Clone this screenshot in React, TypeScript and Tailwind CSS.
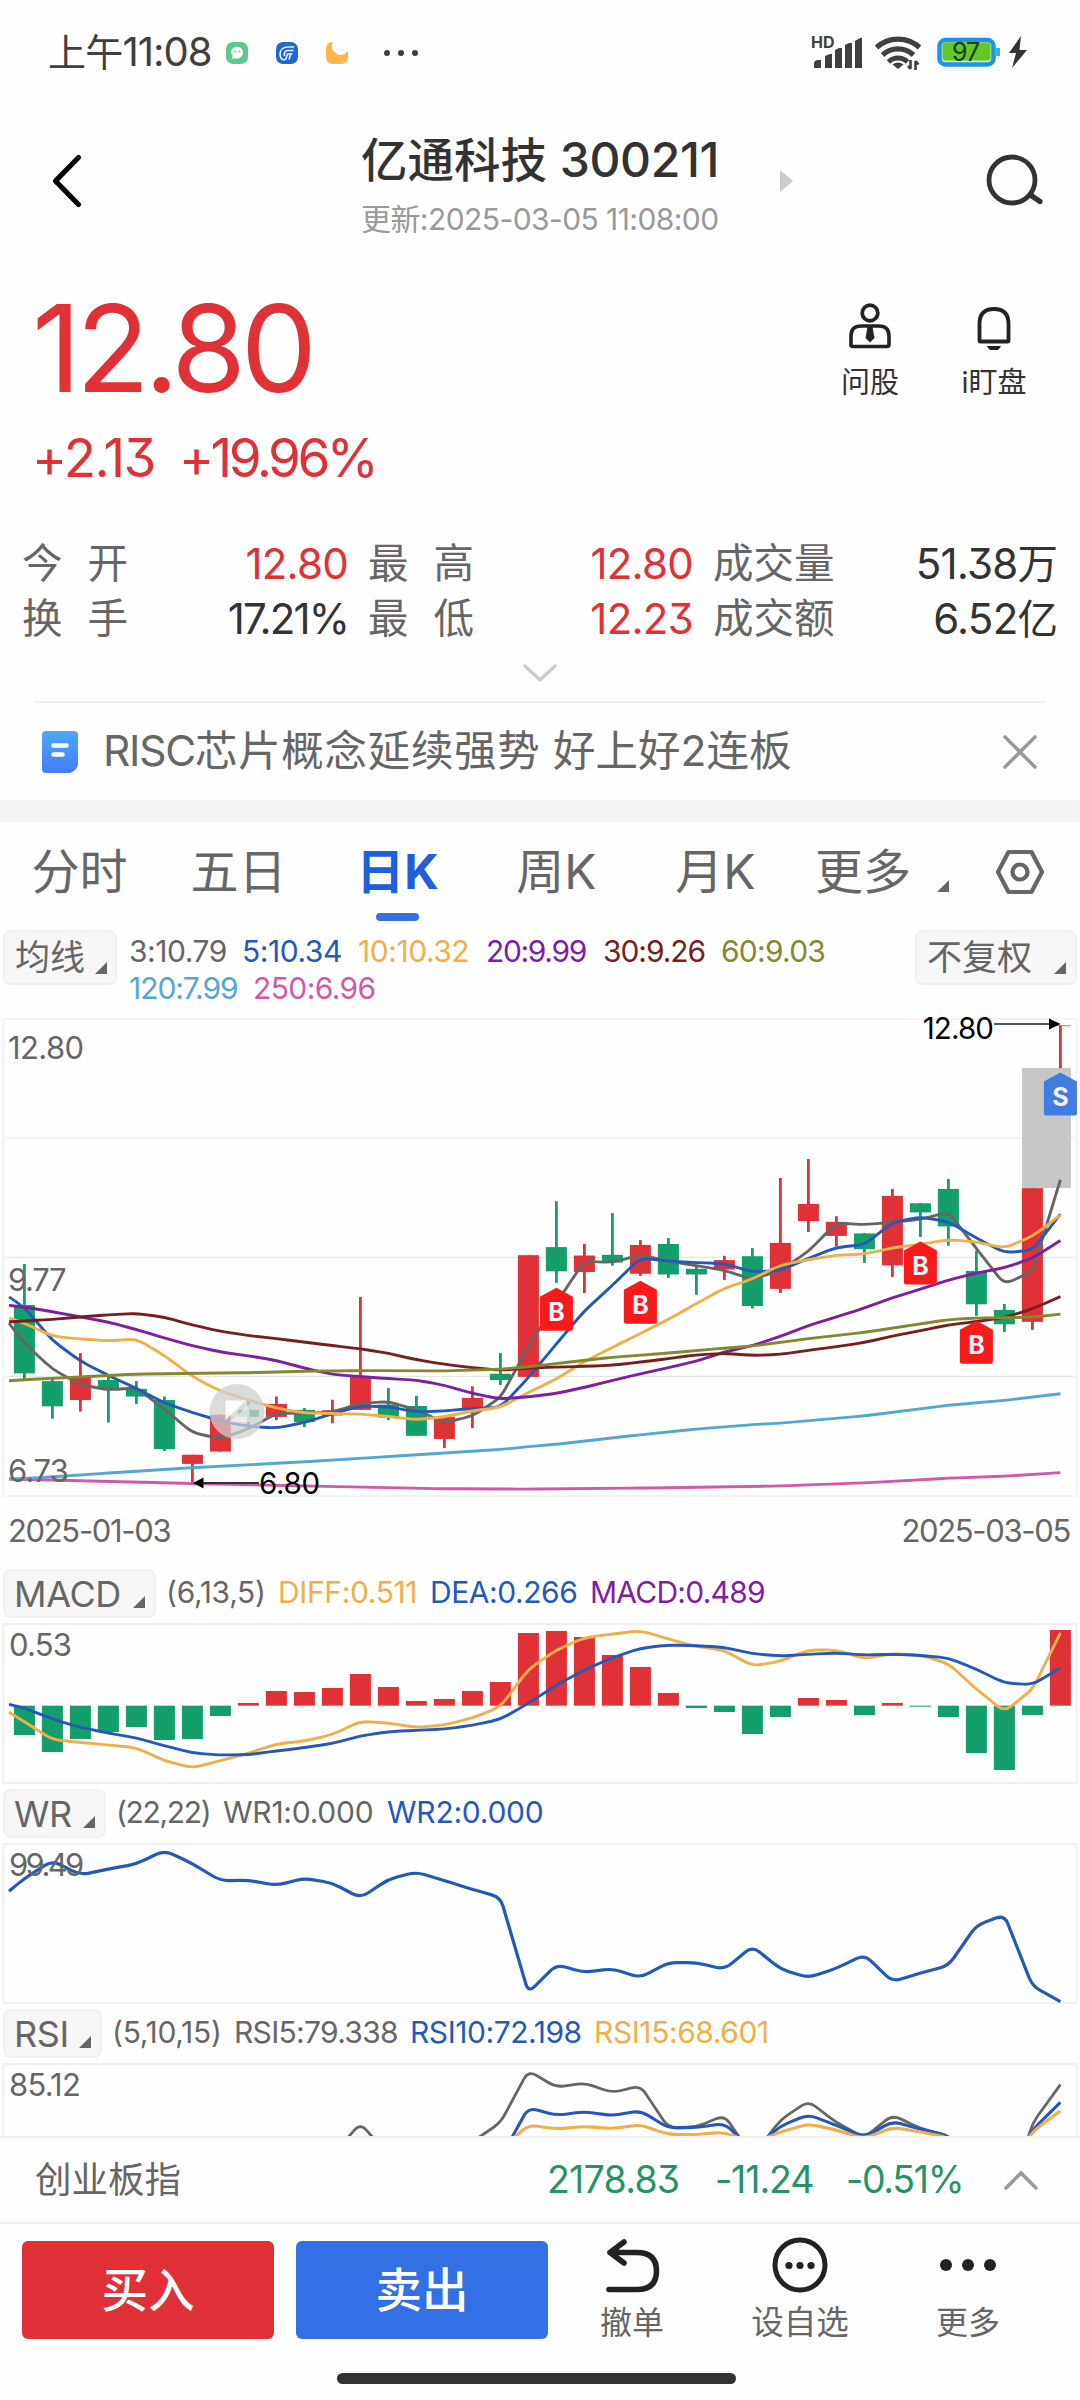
import React from "react";

const RED = "#df3136";
const GREEN = "#149e6b";
const BLUE = "#2459b9";
const ORANGE = "#efb04a";
const GRAY = "#666666";

type Candle = [up: 0 | 1, high: number, top: number, bottom: number, low: number];
type Point = [index: number, value: number];

const STEP = 28;
const FIRST = 24.4;
const xAt = (i: number) => FIRST + STEP * i;

/** Turns a list of values (first one sits on the left edge) into points. */
const series = (values: number[]): Point[] => values.map((v, i) => [i === 0 ? -0.55 : i - 1, v]);

/** Polyline with slightly softened corners. */
function softPath(points: Point[], y: (v: number) => number) {
  const p = points.map(([i, v]) => [xAt(i), y(v)]);
  let d = `M${p[0][0]} ${p[0][1]}`;
  for (let k = 1; k < p.length - 1; k++) {
    const [a, b, c] = [p[k - 1], p[k], p[k + 1]];
    const la = Math.hypot(b[0] - a[0], b[1] - a[1]);
    const lc = Math.hypot(c[0] - b[0], c[1] - b[1]);
    const ta = Math.min(9 / la, 0.5);
    const tc = Math.min(9 / lc, 0.5);
    d += `L${b[0] + (a[0] - b[0]) * ta} ${b[1] + (a[1] - b[1]) * ta}`;
    d += `Q${b[0]} ${b[1]} ${b[0] + (c[0] - b[0]) * tc} ${b[1] + (c[1] - b[1]) * tc}`;
  }
  const e = p[p.length - 1];
  return d + `L${e[0]} ${e[1]}`;
}

const priceY = (v: number) => v / 2.851;
const panelY = (v: number) => v / 3 - 60;
const wrY = (v: number) => v / 3 - 280;

const candles: Candle[] = [
  [0, 724, 841, 1036, 1052], [0, 1052, 1058, 1130, 1165], [1, 978, 1046, 1112, 1145],
  [0, 1046, 1055, 1080, 1176], [0, 1058, 1080, 1102, 1123], [0, 1102, 1112, 1252, 1257],
  [1, 1268, 1268, 1294, 1348], [1, 1154, 1154, 1259, 1259], [0, 1110, 1140, 1160, 1188],
  [1, 1102, 1123, 1160, 1169], [0, 1135, 1140, 1175, 1189], [1, 1111, 1141, 1156, 1178],
  [1, 818, 1044, 1140, 1140], [0, 1078, 1125, 1162, 1169], [0, 1100, 1129, 1214, 1214],
  [1, 1156, 1160, 1223, 1249], [1, 1073, 1106, 1135, 1192], [0, 978, 1037, 1055, 1069],
  [1, 699, 699, 1046, 1046], [0, 545, 676, 745, 778], [1, 667, 700, 747, 807],
  [0, 579, 698, 720, 729], [1, 656, 670, 752, 758], [0, 650, 667, 754, 764],
  [0, 730, 738, 754, 812], [1, 701, 713, 740, 770], [0, 679, 702, 844, 851],
  [1, 479, 664, 795, 807], [1, 425, 553, 602, 633], [1, 588, 604, 644, 674],
  [0, 636, 637, 682, 721], [1, 510, 530, 728, 761], [0, 550, 551, 577, 647],
  [0, 482, 510, 617, 672], [0, 686, 744, 839, 872], [0, 838, 855, 896, 918],
  [1, 508, 508, 889, 912], [1, 44, 44, 46, 166],
];

const averages: { color: string; points: Point[] }[] = [
  {
    color: "#d05aa8",
    points: [[-0.55, 1337], [2, 1342], [6, 1350], [10, 1357], [15, 1365], [18, 1366], [22, 1363], [27, 1357], [30, 1348], [33, 1335], [35, 1329], [37, 1319]],
  },
  {
    color: "#52a8d2",
    points: [[-0.55, 1338], [1, 1331], [3, 1320], [6, 1305], [10, 1288], [13, 1273], [17, 1253], [18, 1245], [19, 1238], [22, 1211], [24, 1195], [26, 1182], [27, 1178], [30, 1157], [33, 1127], [35, 1113], [37, 1094]],
  },
  {
    color: GRAY,
    points: series([893, 950, 1024, 1068, 1083, 1077, 1138, 1205, 1222, 1194, 1150, 1150, 1146, 1122, 1116, 1140, 1176, 1158, 1105, 960, 835, 716, 720, 698, 716, 729, 742, 768, 742, 688, 607, 612, 605, 597, 576, 680, 782, 745, 484]),
  },
  {
    color: BLUE,
    points: series([818, 848, 942, 1001, 1042, 1079, 1120, 1148, 1171, 1187, 1192, 1176, 1151, 1129, 1131, 1146, 1143, 1136, 1133, 1048, 952, 858, 785, 707, 716, 720, 723, 747, 743, 708, 677, 669, 606, 590, 604, 650, 692, 685, 582]),
  },
  {
    color: ORANGE,
    points: series([878, 893, 930, 938, 943, 938, 985, 1045, 1087, 1112, 1135, 1149, 1150, 1152, 1159, 1168, 1160, 1143, 1133, 1090, 1052, 1002, 962, 922, 882, 837, 793, 767, 727, 712, 699, 696, 678, 668, 655, 661, 679, 645, 585]),
  },
  {
    color: "#7d1fa3",
    points: series([842, 847, 860, 875, 890, 911, 935, 957, 975, 986, 999, 1021, 1039, 1045, 1051, 1055, 1070, 1093, 1109, 1103, 1093, 1076, 1056, 1037, 1020, 1001, 975, 957, 930, 900, 875, 850, 820, 796, 770, 750, 735, 708, 657]),
  },
  {
    color: "#751f1e",
    points: series([889, 887, 882, 875, 869, 865, 876, 898, 916, 928, 937, 947, 957, 966, 979, 997, 1010, 1020, 1027, 1021, 1018, 1016, 1013, 1004, 994, 983, 979, 985, 982, 970, 960, 948, 930, 914, 898, 888, 877, 852, 817]),
  },
  {
    color: "#87872f",
    points: [[-0.55, 1057], [0, 1054], [2, 1046], [4, 1038], [6, 1036], [8, 1034], [10, 1030], [12, 1028], [15, 1029], [17, 1024], [18, 1017], [19, 1008], [21, 990], [23, 978], [25, 964], [26, 958], [28, 937], [30, 919], [31, 907], [33, 883], [34, 878], [36, 876], [37, 867]],
  },
];

const macdBars = [525, 576, 537, 516, 501, 540, 537, 468, 429, 393, 396, 384, 342, 381, 423, 417, 393, 366, 219, 213, 231, 285, 321, 399, 444, 456, 522, 471, 414, 420, 465, 429, 440, 471, 579, 630, 465, 210];
const diff = series([457, 485, 539, 547, 555, 563, 602, 624, 602, 580, 552, 543, 524, 484, 489, 502, 495, 474, 440, 328, 270, 233, 222, 212, 237, 259, 271, 318, 304, 270, 270, 296, 281, 285, 311, 387, 455, 388, 219]);
const dea = series([433, 444, 477, 502, 519, 534, 557, 579, 585, 584, 573, 563, 550, 528, 515, 511, 507, 496, 478, 430, 375, 330, 293, 265, 255, 257, 262, 281, 288, 283, 279, 285, 283, 286, 294, 328, 369, 374, 324]);
const wr = series([994, 955, 902, 945, 927, 912, 871, 911, 962, 961, 976, 955, 969, 1014, 958, 936, 962, 988, 1012, 1298, 1214, 1237, 1226, 1253, 1208, 1208, 1228, 1159, 1227, 1253, 1225, 1184, 1265, 1239, 1217, 1096, 1065, 1278, 1325]);

const rsi5: Point[] = [[10, 520], [11, 465], [12, 370], [13, 465], [15, 470], [16, 425], [17, 368], [18, 212], [19, 262], [20, 249], [21, 278], [22, 257], [23, 383], [24, 381], [25, 346], [26, 470], [27, 360], [28, 303], [29, 368], [30, 412], [31, 345], [32, 385], [33, 408], [34, 520], [35, 650], [36, 370], [37, 254]];
const rsi10: Point[] = [[16, 520], [17, 475], [18, 323], [19, 346], [20, 335], [21, 347], [22, 332], [23, 384], [24, 383], [25, 370], [26, 450], [27, 378], [28, 344], [29, 376], [30, 412], [31, 364], [32, 388], [33, 406], [34, 500], [35, 560], [36, 390], [37, 307]];
const rsi15: Point[] = [[16, 490], [17, 450], [18, 375], [19, 387], [20, 379], [21, 386], [22, 374], [23, 404], [24, 404], [25, 396], [26, 430], [27, 396], [28, 372], [29, 390], [30, 416], [31, 382], [32, 396], [33, 412], [34, 500], [35, 530], [36, 395], [37, 333]];

const signals = [
  { index: 19, top: 792, label: "B" },
  { index: 22, top: 772, label: "B" },
  { index: 32, top: 660, label: "B" },
  { index: 34, top: 886, label: "B" },
  { index: 37, top: 178, label: "S" },
];

function Signal({ index, top, label }: { index: number; top: number; label: string }) {
  const x = xAt(index);
  const y = priceY(top);
  return (
    <g>
      <path
        d={`M${x} ${y}L${x + 16.5} ${y + 9}V${y + 41}Q${x + 16.5} ${y + 43} ${x + 14.5} ${y + 43}H${x - 14.5}Q${x - 16.5} ${y + 43} ${x - 16.5} ${y + 41}V${y + 9}Z`}
        fill={label === "S" ? "#417ce0" : "#f91a1c"}
      />
      <text x={x} y={y + 33.5} textAnchor="middle" className="fill-[#eef2ff] text-[25px] font-bold">
        {label}
      </text>
    </g>
  );
}

function Corner({ className = "" }: { className?: string }) {
  return (
    <svg width="12" height="12" viewBox="0 0 12 12" className={`shrink-0 ${className}`}>
      <path d="M12 0V12H0Z" fill="#666" />
    </svg>
  );
}

function Line({ points, y, color, width = 2 }: { points: Point[]; y: (v: number) => number; color: string; width?: number }) {
  return <path d={softPath(points, y)} fill="none" stroke={color} strokeWidth={width} />;
}

function StatusBar() {
  return (
    <div className="flex h-[106px] items-center pl-[48px] pr-[52px] text-[#404040]">
      <span className="-mt-[2px] w-[178px] whitespace-nowrap text-[40px] leading-none tracking-[-0.025em]">
        <span className="text-[38px] tracking-[-0.02em]">上午</span>11:08
      </span>
      <div className="flex items-center gap-[28px]">
        <svg width="22" height="22" viewBox="0 0 22 22">
          <rect width="22" height="22" rx="7" fill="#57cb8e" />
          <path d="M11 4.500a6 6 0 0 1 6 6c0 3.500-2.500 6-6 6H5.500l1.500-2.500a6 6 0 0 1-2-3.500a6 6 0 0 1 6-6z" fill="#fff" />
          <circle cx="9.500" cy="9.500" r="1" fill="#57cb8e" />
          <circle cx="13.500" cy="9.500" r="1" fill="#57cb8e" />
        </svg>
        <svg width="22" height="22" viewBox="0 0 22 22">
          <rect width="22" height="22" rx="7" fill="#1d69cf" />
          <path d="M18 5H12C7 5 4 8 4 12s2 6 5 6M17.500 8.500H12C9 8.500 7.500 11 8.500 14M16.500 12H11.500L9.500 18M14.500 12.500L13 17.500" stroke="#e8f2ff" strokeWidth="1.600" fill="none" />
        </svg>
        <svg width="22" height="22" viewBox="0 0 22 22">
          <path d="M7 0A8 8 0 0 0 10 11.500Q16 15.500 22 9V15Q22 22 15 22H7Q0 22 0 15V7Q0 0 7 0Z" fill="#fdb64c" />
          <path d="M11 8h1M14 8h1M17 8h1" stroke="#fbd9a0" strokeWidth="1.200" />
        </svg>
      </div>
      <div className="ml-[36px] flex gap-2">
        <i className="size-[6px] rounded-full bg-[#404040]" />
        <i className="size-[6px] rounded-full bg-[#404040]" />
        <i className="size-[6px] rounded-full bg-[#404040]" />
      </div>
      <svg className="ml-auto" width="218" height="46" viewBox="810 30 218 46">
        <text x="811" y="47.500" className="text-[16px] font-bold" fill="#404040">HD</text>
        <path d="M814 68V64Q814 60 818 60H821V68ZM825 68V56L830 54H832V68ZM835 68V50L839 48H842V68ZM845 68V45L849 43H852V68ZM855 68V41L860 38H862V68Z" fill="#404040" />
        <g fill="none" stroke="#404040" strokeWidth="5.200">
          <path d="M876.500 47.500A32 32 0 0 1 919.500 47.500" />
          <path d="M882.500 55A22.500 22.500 0 0 1 913.500 55" />
          <path d="M888.500 62A13.500 13.500 0 0 1 907.500 62" strokeWidth="5" />
        </g>
        <path d="M892.500 64.500Q898 60.500 903.500 64.500L898 69Z" fill="#404040" />
        <path d="M910.500 60V69M908 66L910.500 69M915.500 70V61M915.500 61L918.500 64.500" stroke="#404040" strokeWidth="2.600" fill="none" />
        <rect x="939.500" y="40" width="54" height="24.500" rx="6" fill="#c9ebc6" stroke="#1c95e6" strokeWidth="4.500" />
        <rect x="942.500" y="42.500" width="48" height="18" rx="3" fill="#63c728" />
        <rect x="996" y="48" width="4" height="8" fill="#42a8ea" />
        <text x="965.500" y="61" textAnchor="middle" className="text-[25px] tracking-[-1.200px]" fill="#16400c">97</text>
        <path d="M1021 36L1009 53H1016L1012 68L1027 50H1019.500Z" fill="#333" />
      </svg>
    </div>
  );
}

function Header() {
  return (
    <div className="flex h-[152px] items-start">
      <svg className="ml-[48px] mt-[46px]" width="40" height="58" viewBox="0 0 40 58">
        <path d="M30.500 5.500L7.500 29L30.500 52.500" fill="none" stroke="#000" strokeWidth="5.200" strokeLinecap="round" strokeLinejoin="round" />
      </svg>
      <div className="ml-[172px] w-[560px] pl-[101px] pt-[30px]">
        <div className="flex h-[48px] items-center">
          <div className="w-[418px] whitespace-nowrap text-[48px] font-medium leading-none text-[#333]">
            <span className="text-[46.500px]">亿通科技</span> <span className="tracking-[-0.008em]">300211</span>
          </div>
        </div>
        <div className="mt-[18px] flex h-[34px] items-center whitespace-nowrap text-[30px] leading-none tracking-[-0.019em] text-[#999]">
          更新:2025-03-05 11:08:00
        </div>
      </div>
      <svg className="-ml-[40px] mt-[64px]" width="13" height="22" viewBox="0 0 13 22">
        <path d="M0 0L13 11L0 22Z" fill="#ccc" />
      </svg>
      <svg className="ml-[190px] mt-[44px]" width="62" height="62" viewBox="0 0 62 62">
        <circle cx="29" cy="30" r="23" fill="none" stroke="#333" strokeWidth="4.800" />
        <path d="M47.500 45L57 51.500" stroke="#333" strokeWidth="5.200" strokeLinecap="round" />
      </svg>
    </div>
  );
}

function Quote() {
  return (
    <div className="flex h-[262px]">
      <div className="w-[800px] pl-[32px] text-[#df3136] [font-feature-settings:'cv09']">
        <div className="mt-[30px] flex h-[120px] items-center text-[121px] leading-none tracking-[-0.044em]">12.80</div>
        <div className="mt-[20px] flex h-[60px] items-center text-[53px] leading-none tracking-[-0.03em]">
          <span className="w-[147px]">+2.13</span>
          <span className="tracking-[-0.066em]">+19.96%</span>
        </div>
      </div>
      <div className="flex pt-[42px]">
        <div className="flex w-[140px] flex-col items-center">
          <svg width="48" height="50" viewBox="0 0 48 50">
            <circle cx="24" cy="13" r="7.800" fill="none" stroke="#222" strokeWidth="3.800" />
            <path d="M5 46.500V36Q5 26 15 26H33Q43 26 43 36V44.500Q43 46.500 41 46.500H7Q5 46.500 5 44.500Z" fill="none" stroke="#222" strokeWidth="3.600" />
            <path d="M21.500 27H26.500L28.500 38L24 42.500L19.500 38Z" fill="#222" />
          </svg>
          <span className="mt-[18px] text-[29px] leading-none text-[#333]">问股</span>
        </div>
        <div className="flex w-[108px] flex-col items-center">
          <svg width="48" height="50" viewBox="0 0 48 50">
            <path d="M9.500 24Q9.500 9 24 9Q38.500 9 38.500 24V41Q38.500 41.500 38 41.500H10Q9.500 41.500 9.500 41Z" fill="none" stroke="#222" strokeWidth="3.800" strokeLinejoin="round" />
            <path d="M17 46H31Q29 51 24 51Q19 51 17 46Z" fill="#222" />
          </svg>
          <span className="mt-[18px] whitespace-nowrap text-[29px] leading-none text-[#333]">i盯盘</span>
        </div>
      </div>
    </div>
  );
}

const stats = [
  [
    { label: "今 开", value: "12.80", red: true },
    { label: "最 高", value: "12.80", red: true },
    { label: "成交量", value: "51.38", unit: "万" },
  ],
  [
    { label: "换 手", value: "17.21%" },
    { label: "最 低", value: "12.23", red: true },
    { label: "成交额", value: "6.52", unit: "亿" },
  ],
];

function Stats() {
  return (
    <div className="flex h-[181px] flex-col pt-[16px]">
      {stats.map((row, r) => (
        <div key={r} className="grid h-[55.500px] grid-cols-[326px_325px_1fr] items-center gap-[20px] pl-[22px] pr-[22px]">
          {row.map((s) => (
            <div key={s.label} className="flex items-center justify-between whitespace-nowrap leading-none">
              {s.label.includes(" ") ? (
                <span className="flex gap-[25px] text-[40.500px] text-[#666]">
                  <span>{s.label[0]}</span>
                  <span>{s.label[2]}</span>
                </span>
              ) : (
                <span className="text-[40.500px] text-[#666]">{s.label}</span>
              )}
              <span className={`text-[42px] [font-feature-settings:'cv09'] ${s.value.includes("%") ? "tracking-[-0.045em]" : "tracking-[-0.018em]"} ${s.red ? "text-[#df3136]" : "text-[#333]"}`}>
                {s.value}
                {s.unit && <span className="text-[40.500px] tracking-normal">{s.unit}</span>}
              </span>
            </div>
          ))}
        </div>
      ))}
      <svg className="ml-[523px] mt-[17px]" width="34" height="20" viewBox="0 0 34 20">
        <path d="M2 2L17 16L32 2" fill="none" stroke="#ccc" strokeWidth="3.400" strokeLinecap="round" />
      </svg>
    </div>
  );
}

function News() {
  return (
    <div className="mx-[34px] flex h-[99px] items-center border-t-2 border-[#f0f0f0] pl-[8px] pr-[9px]">
      <svg width="36" height="42" viewBox="0 0 36 42">
        <defs>
          <linearGradient id="note" x1="0" y1="0" x2="0" y2="1">
            <stop offset="0" stopColor="#4aa8fb" />
            <stop offset="1" stopColor="#467cf8" />
          </linearGradient>
        </defs>
        <path d="M4 0H32Q36 0 36 4V34Q34 40 28 42H4Q0 42 0 38V4Q0 0 4 0Z" fill="url(#note)" />
        <path d="M11.500 14.500H24.500M11.500 23.500H20.500" stroke="#fff" strokeWidth="4.500" strokeLinecap="round" />
      </svg>
      <span className="ml-[25px] whitespace-nowrap text-[42.500px] leading-none text-[#666]">
        <span className="tracking-[-0.03em]">RISC</span>
        <span className="tracking-[0.016em]">芯片概念延续强势 </span>好上好2连板
      </span>
      <svg className="ml-auto" width="34" height="34" viewBox="0 0 34 34">
        <path d="M2 2L32 32M32 2L2 32" stroke="#999" strokeWidth="3.600" strokeLinecap="round" />
      </svg>
    </div>
  );
}

const tabs = ["分时", "五日", "日K", "周K", "月K"];

function Tabs() {
  return (
    <div className="flex h-[108px] pt-[8px] text-[48px] leading-none text-[#666]">
      {tabs.map((t) => (
        <div key={t} className={`relative flex h-[84px] w-[159px] items-center justify-center whitespace-nowrap ${t === "日K" ? "font-bold text-[#1f5fdb]" : ""}`}>
          {t}
          {t === "日K" && <i className="absolute -bottom-[7px] h-[8px] w-[43px] rounded-full bg-[#3670e0]" />}
        </div>
      ))}
      <div className="flex h-[84px] items-center pl-[20px]">
        <span>更多</span>
        <Corner className="ml-[26px] mt-[28px]" />
        <svg className="ml-[46px]" width="50" height="46" viewBox="0 0 50 46">
          <path d="M13.500 3H36.500L47 23L36.500 43H13.500L3 23Z" fill="none" stroke="#666" strokeWidth="4.200" strokeLinejoin="round" />
          <circle cx="25" cy="23" r="7.500" fill="none" stroke="#666" strokeWidth="4.200" />
        </svg>
      </div>
    </div>
  );
}

function AverageRow() {
  return (
    <div className="flex h-[80px] px-[3px]">
      <div className="flex h-[55px] w-[114px] items-center justify-between rounded-lg border-2 border-[#f1f1f1] bg-[#f7f7f7] pl-[10px] pr-[8px] text-[35px] leading-none text-[#666]">
        <span className="whitespace-nowrap">均线</span>
        <Corner className="mt-[20px]" />
      </div>
      <div className="w-[798px] whitespace-nowrap pl-[12px] pt-[2px] text-[30px] leading-none tracking-[-0.035em]">
        <div className="flex h-[37px] items-center">
          <span className="w-[113px] tracking-[-0.015em] text-[#666]">3:10.79</span>
          <span className="w-[116px] tracking-[-0.015em] text-[#2459b9]">5:10.34</span>
          <span className="w-[128px] tracking-[-0.015em] text-[#efb04a]">10:10.32</span>
          <span className="w-[117px] tracking-[-0.045em] text-[#7d1fa3]">20:9.99</span>
          <span className="w-[118px] text-[#751f1e]">30:9.26</span>
          <span className="tracking-[-0.025em] text-[#87872f]">60:9.03</span>
        </div>
        <div className="flex h-[37px] items-center">
          <span className="w-[124px] text-[#52a8d2]">120:7.99</span>
          <span className="tracking-[-0.02em] text-[#d05aa8]">250:6.96</span>
        </div>
      </div>
      <div className="flex h-[55px] w-[162px] items-center justify-between rounded-lg border-2 border-[#f1f1f1] bg-[#f7f7f7] pl-[10px] pr-[9px] text-[35px] leading-none text-[#666]">
        <span className="whitespace-nowrap">不复权</span>
        <Corner className="mt-[20px]" />
      </div>
    </div>
  );
}

function PriceChart() {
  return (
    <svg width="1080" height="490" viewBox="0 0 1080 490" className="block overflow-visible">
      <rect x="3.500" y="9" width="1073" height="477" fill="none" stroke="#f0f0f0" strokeWidth="1.600" />
      <path d="M6 128H1074M6 247.300H1074M6 366.300H1074" stroke="#e6e6e6" strokeWidth="1.200" />
      <rect x="1022" y="58" width="49" height="120" fill="#c7c7c7" />
      {candles.map(([up, high, top, bottom, low], i) => (
        <g key={i} fill={up ? RED : GREEN}>
          <rect x={xAt(i) - 1.400} y={priceY(high)} width="2.800" height={priceY(low - high)} />
          <rect x={xAt(i) - 10.500} y={priceY(top)} width="21" height={priceY(bottom - top)} />
        </g>
      ))}
      {averages.map((a) => (
        <Line key={a.color} points={a.points} y={priceY} color={a.color} width={2.900} />
      ))}
      <circle cx="237" cy="401.500" r="27.500" fill="#cfcfcf" fillOpacity="0.75" />
      <path d="M225.500 390.500H246L225.500 410Z" fill="#fff" fillOpacity="0.9" />
      <path d="M249.500 394V412H230Z" fill="#fff" fillOpacity="0.5" />
      {signals.map((s) => (
        <Signal key={s.index} {...s} />
      ))}
      <path d="M994 14H1051" stroke="#555" strokeWidth="1.800" />
      <path d="M1049 8.500L1060.500 14L1049 19.500Z" fill="#000" />
      <path d="M202 473H259" stroke="#333" strokeWidth="1.800" />
      <path d="M193 473L203.500 467.500V478.500Z" fill="#000" />
      <g className="text-[31px] tracking-[-0.02em]" fill="#666">
        <text x="8" y="49">12.80</text>
        <text x="8" y="280.500" className="tracking-[-0.045em]">9.77</text>
        <text x="8" y="472">6.73</text>
      </g>
      <g className="text-[29.500px] tracking-[-0.01em]" fill="#000">
        <text x="259" y="484">6.80</text>
        <text x="993" y="29" textAnchor="end" className="tracking-[-0.03em]">12.80</text>
      </g>
    </svg>
  );
}

type HeaderItem = { text: string; cls: string };

function PanelHeader({ name, button, items }: { name: string; button: string; items: HeaderItem[] }) {
  return (
    <div className="flex h-[60px] items-start pl-[3px] pt-[9px] leading-none">
      <div className={`flex h-[49px] shrink-0 items-center justify-between rounded-lg border-2 border-[#f1f1f1] bg-[#f7f7f7] pl-[9px] pr-[9px] text-[36px] tracking-[-0.01em] text-[#666] ${button}`}>
        <span>{name}</span>
        <Corner className="mt-[16px]" />
      </div>
      <div className="flex h-[46px] items-center whitespace-nowrap pl-[10px] text-[30px]">
        {items.map((v) => (
          <span key={v.text} className={v.cls}>{v.text}</span>
        ))}
      </div>
    </div>
  );
}

function Frame({ label, tight = false, children }: { label: string; tight?: boolean; children: React.ReactNode }) {
  return (
    <svg width="1080" height="160" viewBox="0 0 1080 160" className="block overflow-visible">
      <rect x="3.500" y="4" width="1073" height="159" fill="none" stroke="#f0f0f0" strokeWidth="2" />
      {children}
      <text x="9" y="36" className={`text-[31px] ${tight ? "tracking-[-0.085em]" : "tracking-[-0.025em]"}`} fill="#666">{label}</text>
    </svg>
  );
}

function Indicators() {
  return (
    <div className="h-[576px] overflow-hidden">
      <PanelHeader
        name="MACD"
        button="w-[153px]"
        items={[
          { text: "(6,13,5)", cls: "w-[112px] tracking-[-0.01em] text-[#666]" },
          { text: "DIFF:0.511", cls: "w-[152px] tracking-[-0.012em] text-[#efb04a]" },
          { text: "DEA:0.266", cls: "w-[160px] tracking-[-0.015em] text-[#2459b9]" },
          { text: "MACD:0.489", cls: "tracking-[-0.025em] text-[#7d1fa3]" },
        ]}
      />
      <Frame label="0.53">
        {macdBars.map((v, i) => (
          <rect key={i} x={xAt(i) - 10.500} y={panelY(Math.min(v, 437))} width="21" height={Math.abs(v - 437) / 3} fill={v < 437 ? RED : GREEN} />
        ))}
        <Line points={diff} y={panelY} color={ORANGE} width={2.900} />
        <Line points={dea} y={panelY} color={BLUE} width={2.900} />
      </Frame>
      <PanelHeader
        name="WR"
        button="w-[103px]"
        items={[
          { text: "(22,22)", cls: "w-[107px] tracking-[-0.045em] text-[#666]" },
          { text: "WR1:0.000", cls: "w-[164px] tracking-[-0.008em] text-[#666]" },
          { text: "WR2:0.000", cls: "tracking-[-0.008em] text-[#2459b9]" },
        ]}
      />
      <Frame label="99.49" tight>
        <Line points={wr} y={wrY} color={BLUE} width={3.200} />
      </Frame>
      <PanelHeader
        name="RSI"
        button="w-[99px]"
        items={[
          { text: "(5,10,15)", cls: "w-[122px] tracking-[-0.01em] text-[#666]" },
          { text: "RSI5:79.338", cls: "w-[176px] tracking-[-0.023em] text-[#666]" },
          { text: "RSI10:72.198", cls: "w-[184px] tracking-[-0.015em] text-[#2459b9]" },
          { text: "RSI15:68.601", cls: "tracking-[-0.014em] text-[#efb04a]" },
        ]}
      />
      <Frame label="85.12">
        <Line points={rsi5} y={panelY} color={GRAY} width={2.800} />
        <Line points={rsi10} y={panelY} color={BLUE} width={3.100} />
        <Line points={rsi15} y={panelY} color={ORANGE} width={3.100} />
      </Frame>
    </div>
  );
}

function IndexBar() {
  return (
    <div className="flex h-[88px] items-center border-y-2 border-[#f0f0f0] pl-[35px] pr-[42px] leading-none">
      <span className="text-[36.500px] text-[#666]">创业板指</span>
      <div className="ml-auto flex text-[37.500px] tracking-[-0.02em] text-[#249467] [font-feature-settings:'cv09']">
        <span className="w-[168px]">2178.83</span>
        <span className="w-[131px] tracking-[-0.03em]">-11.24</span>
        <span className="w-[158px] tracking-[-0.035em]">-0.51%</span>
      </div>
      <svg width="34" height="20" viewBox="0 0 34 20">
        <path d="M2 18L17 3L32 18" fill="none" stroke="#999" strokeWidth="3.600" strokeLinecap="round" />
      </svg>
    </div>
  );
}

function ActionBar() {
  return (
    <div className="flex h-[133px] pl-[22px] pt-[17px] leading-none">
      <button className="flex h-[98px] w-[252px] items-center justify-center rounded-[6px] bg-[#df3136] text-[46.500px] font-medium text-white">买入</button>
      <button className="ml-[22px] flex h-[98px] w-[252px] items-center justify-center rounded-[6px] bg-[#3370e6] text-[46.500px] font-medium text-white">卖出</button>
      <div className="flex w-[168px] flex-col items-center">
        <svg width="60" height="58" viewBox="0 0 60 58" className="-mt-[4px]">
          <path d="M22 5L8 15.500L22 26M8 15.500H35Q54.500 15.500 54.500 34T35 52.500H7" fill="none" stroke="#222" strokeWidth="5.600" strokeLinejoin="round" strokeLinecap="round" />
        </svg>
        <span className="mt-[12px] text-[32px] text-[#666]">撤单</span>
      </div>
      <div className="flex w-[168px] flex-col items-center">
        <svg width="60" height="58" viewBox="0 0 60 58" className="-mt-[4px]">
          <circle cx="30" cy="28" r="25" fill="none" stroke="#222" strokeWidth="5" />
          <circle cx="19" cy="28.500" r="3.600" fill="#222" />
          <circle cx="30" cy="28.500" r="3.600" fill="#222" />
          <circle cx="41" cy="28.500" r="3.600" fill="#222" />
        </svg>
        <span className="mt-[12px] whitespace-nowrap text-[32.500px] text-[#666]">设自选</span>
      </div>
      <div className="flex w-[168px] flex-col items-center">
        <svg width="60" height="58" viewBox="0 0 60 58" className="-mt-[4px]">
          <circle cx="8" cy="28" r="6" fill="#222" />
          <circle cx="30" cy="28" r="6" fill="#222" />
          <circle cx="52" cy="28" r="6" fill="#222" />
        </svg>
        <span className="mt-[12px] text-[32px] text-[#666]">更多</span>
      </div>
    </div>
  );
}

export default function App() {
  return (
    <div className="flex h-[2400px] w-[1080px] flex-col overflow-hidden bg-[#fefefe] font-['Inter','Noto_Sans_CJK_SC',sans-serif]">
      <StatusBar />
      <Header />
      <Quote />
      <Stats />
      <News />
      <div className="h-[22px] bg-[#f4f4f4]" />
      <Tabs />
      <AverageRow />
      <PriceChart />
      <div className="flex h-[60px] items-center justify-between pl-[8px] pr-[10px] pt-[1px] text-[31px] leading-none tracking-[-0.043em] text-[#666]">
        <span>2025-01-03</span>
        <span>2025-03-05</span>
      </div>
      <Indicators />
      <IndexBar />
      <ActionBar />
      <div className="ml-[337px] mt-[16px] h-[11px] w-[399px] rounded-full bg-[#333]" />
    </div>
  );
}
